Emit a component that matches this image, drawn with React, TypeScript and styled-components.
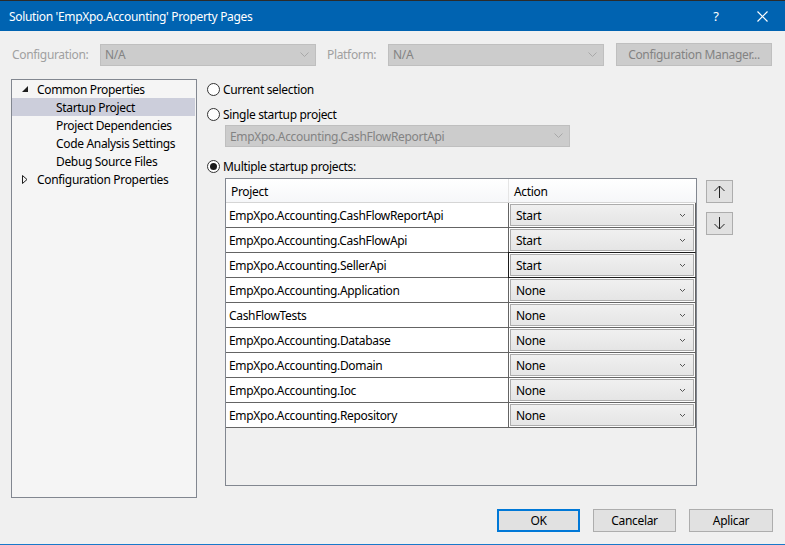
import React from "react";
import styled, { createGlobalStyle } from "styled-components";

const Global = createGlobalStyle`
  html, body { margin: 0; padding: 0; background: #f0f0f0; }
  * { box-sizing: border-box; }
  body { font-family: "Segoe UI", "Noto Sans", "Liberation Sans", sans-serif; font-size: 12px; letter-spacing: -0.33px; color: #000; }
`;

const Window = styled.div`
  width: 785px;
  height: 545px;
  display: flex;
  flex-direction: column;
  background: #f0f0f0;
  border-top: 1px solid #2b2b2b;
  border-bottom: 1px solid #1979ca;
  overflow: hidden;
`;

const TitleBar = styled.div`
  height: 30px;
  flex: none;
  background: #0063b1;
  color: #fff;
  display: flex;
  align-items: center;
  padding-left: 9px;
  font-size: 12px;
`;

const Title = styled.div`
  flex: 1;
`;

const TitleBtn = styled.div<{ $w: number }>`
  width: ${(p) => p.$w}px;
  height: 30px;
  display: flex;
  align-items: center;
  justify-content: center;
  color: #fff;
  font-size: 13px;
`;

const ConfigRow = styled.div`
  display: flex;
  align-items: center;
  margin-top: 12px;
  height: 23px;
  padding-left: 12px;
  flex: none;
`;

const DimLabel = styled.span<{ $w: number }>`
  width: ${(p) => p.$w}px;
  color: #a0a0a0;
`;

const DisabledCombo = styled.div<{ $w: number }>`
  width: ${(p) => p.$w}px;
  height: 22px;
  background: #cccccc;
  border: 1px solid #bfbfbf;
  display: flex;
  align-items: center;
  padding: 0 6px 0 4px;
  color: #838383;
  justify-content: space-between;
`;

const Button = styled.div<{ $w: number; $default?: boolean; $disabled?: boolean }>`
  width: ${(p) => p.$w}px;
  height: 23px;
  display: flex;
  align-items: center;
  justify-content: center;
  background: ${(p) => (p.$disabled ? "#cccccc" : "#e1e1e1")};
  border: ${(p) => (p.$default ? "2px solid #0078d7" : p.$disabled ? "1px solid #bfbfbf" : "1px solid #adadad")};
  color: ${(p) => (p.$disabled ? "#838383" : "#000")};
`;

const Main = styled.div`
  display: flex;
  margin-top: 13px;
  padding-left: 11px;
  flex: none;
`;

const Tree = styled.div`
  width: 186px;
  height: 419px;
  background: #f5f5f5;
  border: 1px solid #828790;
`;

const TreeRow = styled.div<{ $indent: number; $selected?: boolean }>`
  height: 18px;
  display: flex;
  align-items: center;
  padding-left: ${(p) => p.$indent}px;
  background: ${(p) => (p.$selected ? "#cccedb" : "transparent")};
  margin-right: 1px;
`;

const Expander = styled.span`
  width: 15px;
  display: inline-flex;
  align-items: center;
`;

const Content = styled.div`
  margin-left: 10px;
  width: 530px;
  display: flex;
  flex-direction: column;
`;

const RadioRow = styled.label<{ $mt: number }>`
  display: flex;
  align-items: center;
  height: 18px;
  margin-top: ${(p) => p.$mt}px;
  gap: 3px;
`;

const RadioCircle = styled.span<{ $on?: boolean }>`
  width: 13px;
  height: 13px;
  border-radius: 50%;
  border: 1px solid #333;
  background: #fff;
  display: inline-flex;
  align-items: center;
  justify-content: center;
  &::after {
    content: "";
    width: 7px;
    height: 7px;
    border-radius: 50%;
    background: ${(p) => (p.$on ? "#1a1a1a" : "transparent")};
  }
`;

const SingleCombo = styled(DisabledCombo)`
  margin-left: 18px;
  margin-top: 2px;
`;

const TableWrap = styled.div`
  display: flex;
  margin-top: 3px;
  margin-left: 18px;
`;

const Table = styled.div`
  width: 472px;
  height: 308px;
  border: 1px solid #828790;
  background: #f0f0f0;
  display: flex;
  flex-direction: column;
`;

const HeaderRow = styled.div`
  display: grid;
  grid-template-columns: 283px 187px;
  height: 24px;
  background: linear-gradient(#ffffff, #f6f7f9);
  border-bottom: 1px solid #d5d5d5;
`;

const HeaderCell = styled.div<{ $first?: boolean }>`
  display: flex;
  align-items: center;
  padding-left: 5px;
  padding-top: 1px;
  border-right: ${(p) => (p.$first ? "1px solid #e5e5e5" : "none")};
`;

const Row = styled.div`
  display: grid;
  grid-template-columns: 283px 187px;
  height: 25px;
  background: #fff;
  border-bottom: 1px solid #646464;
`;

const NameCell = styled.div`
  display: flex;
  align-items: center;
  padding-left: 3px;
  border-right: 1px solid #646464;
`;

const ActionCell = styled.div<{ $focus?: boolean }>`
  padding: 1px;
  border: ${(p) => (p.$focus ? "1px solid #1a1a1a" : "none")};
  margin: ${(p) => (p.$focus ? "-1px 0 -1px -1px" : "0")};
  border-right: 1px solid #646464;
  display: flex;
`;

const ActionCombo = styled.div`
  flex: 1;
  border: 1px solid #acacac;
  background: linear-gradient(#f0f0f0, #e5e5e5);
  display: flex;
  align-items: center;
  justify-content: space-between;
  padding: 0 7px 0 5px;
`;

const SideButtons = styled.div`
  margin-left: 9px;
  margin-top: 2px;
  display: flex;
  flex-direction: column;
  gap: 9px;
`;

const ArrowBtn = styled.div`
  width: 27px;
  height: 23px;
  background: #e1e1e1;
  border: 1px solid #adadad;
  display: flex;
  align-items: center;
  justify-content: center;
`;

const Footer = styled.div`
  display: flex;
  justify-content: flex-end;
  gap: 13px;
  padding-right: 12px;
  margin-top: 11px;
`;

const Chevron = ({ color = "#888" }: { color?: string }) => (
  <svg width="9" height="6" viewBox="0 0 9 6">
    <path d="M0.5 0.5 L4.5 4.5 L8.5 0.5" fill="none" stroke={color} strokeWidth="1" />
  </svg>
);

const SmallChevron = () => (
  <svg width="7" height="5" viewBox="0 0 7 5">
    <path d="M1 1 L3.5 3.5 L6 1" fill="none" stroke="#555" strokeWidth="1" />
  </svg>
);

const projects: [string, string][] = [
  ["EmpXpo.Accounting.CashFlowReportApi", "Start"],
  ["EmpXpo.Accounting.CashFlowApi", "Start"],
  ["EmpXpo.Accounting.SellerApi", "Start"],
  ["EmpXpo.Accounting.Application", "None"],
  ["CashFlowTests", "None"],
  ["EmpXpo.Accounting.Database", "None"],
  ["EmpXpo.Accounting.Domain", "None"],
  ["EmpXpo.Accounting.Ioc", "None"],
  ["EmpXpo.Accounting.Repository", "None"],
];

export default function App() {
  return (
    <Window>
      <Global />
      <TitleBar>
        <Title>Solution 'EmpXpo.Accounting' Property Pages</Title>
        <TitleBtn $w={46}>?</TitleBtn>
        <TitleBtn $w={46}>
          <svg width="11" height="11" viewBox="0 0 11 11">
            <path d="M0.5 0.5 L10.5 10.5 M10.5 0.5 L0.5 10.5" stroke="#fff" strokeWidth="1.2" />
          </svg>
        </TitleBtn>
      </TitleBar>
      <ConfigRow>
        <DimLabel $w={88}>Configuration:</DimLabel>
        <DisabledCombo $w={216}>
          N/A <Chevron color="#a8a8a8" />
        </DisabledCombo>
        <DimLabel $w={61} style={{ marginLeft: 11 }}>Platform:</DimLabel>
        <DisabledCombo $w={216}>
          N/A <Chevron color="#a8a8a8" />
        </DisabledCombo>
        <Button $w={156} $disabled style={{ marginLeft: 12 }}>
          Configuration Manager...
        </Button>
      </ConfigRow>
      <Main>
        <Tree>
          <TreeRow $indent={10}>
            <Expander>
              <svg width="7" height="7" viewBox="0 0 7 7">
                <path d="M6 0 L6 6 L0 6 Z" fill="#1e1e1e" />
              </svg>
            </Expander>
            Common Properties
          </TreeRow>
          <TreeRow $indent={44} $selected>Startup Project</TreeRow>
          <TreeRow $indent={44}>Project Dependencies</TreeRow>
          <TreeRow $indent={44}>Code Analysis Settings</TreeRow>
          <TreeRow $indent={44}>Debug Source Files</TreeRow>
          <TreeRow $indent={10}>
            <Expander>
              <svg width="6" height="9" viewBox="0 0 6 9">
                <path d="M0.5 0.5 L5 4.5 L0.5 8.5 Z" fill="none" stroke="#1e1e1e" strokeWidth="1" />
              </svg>
            </Expander>
            Configuration Properties
          </TreeRow>
        </Tree>
        <Content>
          <RadioRow $mt={1}>
            <RadioCircle /> Current selection
          </RadioRow>
          <RadioRow $mt={7}>
            <RadioCircle /> Single startup project
          </RadioRow>
          <SingleCombo $w={345}>
            EmpXpo.Accounting.CashFlowReportApi <Chevron color="#a8a8a8" />
          </SingleCombo>
          <RadioRow $mt={10}>
            <RadioCircle $on /> Multiple startup projects:
          </RadioRow>
          <TableWrap>
            <Table>
              <HeaderRow>
                <HeaderCell $first>Project</HeaderCell>
                <HeaderCell>Action</HeaderCell>
              </HeaderRow>
              {projects.map(([name, action], i) => (
                <Row key={name}>
                  <NameCell>{name}</NameCell>
                  <ActionCell $focus={i === 2}>
                    <ActionCombo>
                      {action}
                      <SmallChevron />
                    </ActionCombo>
                  </ActionCell>
                </Row>
              ))}
            </Table>
            <SideButtons>
              <ArrowBtn>
                <svg width="11" height="13" viewBox="0 0 11 13">
                  <path d="M5.5 1 L5.5 13 M0.5 6 L5.5 1 L10.5 6" fill="none" stroke="#222" strokeWidth="1" />
                </svg>
              </ArrowBtn>
              <ArrowBtn>
                <svg width="11" height="13" viewBox="0 0 11 13">
                  <path d="M5.5 0 L5.5 12 M0.5 7 L5.5 12 L10.5 7" fill="none" stroke="#222" strokeWidth="1" />
                </svg>
              </ArrowBtn>
            </SideButtons>
          </TableWrap>
        </Content>
      </Main>
      <Footer>
        <Button $w={83} $default>OK</Button>
        <Button $w={83}>Cancelar</Button>
        <Button $w={84}>Aplicar</Button>
      </Footer>
    </Window>
  );
}
